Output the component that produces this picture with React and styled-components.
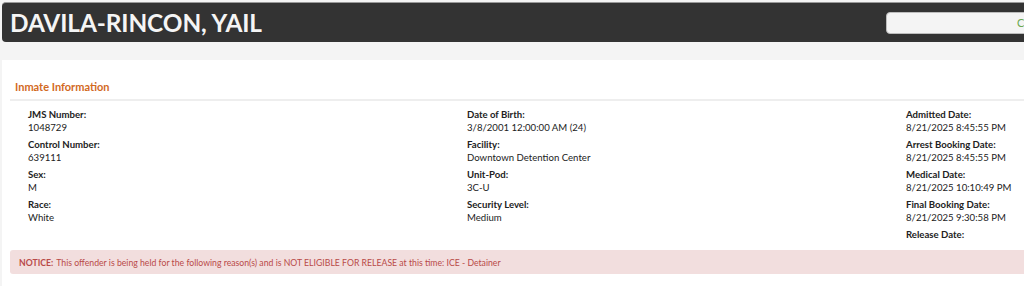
import styled, { createGlobalStyle } from "styled-components";

const GlobalStyle = createGlobalStyle`
  html, body {
    margin: 0;
    padding: 0;
    background: #f4f4f4;
    overflow: hidden;
    font-family: Lato, "Open Sans", sans-serif;
  }
`;

const Page = styled.div`
  width: 1080px;
  padding: 2px 0 0 2px;
`;

const Header = styled.header`
  display: flex;
  align-items: center;
  justify-content: space-between;
  height: 40px;
  background: #333333;
  border-top: 1px solid #9a9a9a;
  box-sizing: border-box;
  border-radius: 4px 0 0 4px;
  padding: 0 0 0 8px;
  margin-bottom: 18px;

  h1 {
    margin: 0;
    color: #f5f5f5;
    font-size: 24.4px;
    font-weight: 700;
    letter-spacing: -0.1px;
  }
`;

const Search = styled.div`
  width: 194px;
  height: 22px;
  margin-right: 2px;
  background: #f4f4f4;
  border-radius: 4px;
  border: 1px solid #bdbdbd;
  box-sizing: border-box;
  display: flex;
  align-items: center;
  padding-left: 130px;
  color: #6aa84f;
  font-size: 11px;
`;

const Panel = styled.section`
  background: #ffffff;
  padding: 20px 0 12px 8px;
`;

const PanelTitle = styled.h2`
  margin: 0 0 0 5px;
  color: #d2691e;
  font-size: 11px;
  font-weight: 700;
  padding-bottom: 6px;
`;

const Divider = styled.div`
  height: 2px;
  background: #eeeeee;
  margin-bottom: 7px;
`;

const Grid = styled.div`
  display: grid;
  grid-template-columns: 439px 439px 1fr;
  padding-left: 18px;
`;

const Column = styled.div`
  display: flex;
  flex-direction: column;
`;

const Field = styled.div`
  display: flex;
  flex-direction: column;
  margin-bottom: 4px;
  font-size: 9.6px;
  line-height: 13px;
  color: #222;
`;

const Label = styled.span`
  font-weight: 700;
`;

const Notice = styled.div`
  margin: 5px 0 0 0;
  background: #f2dede;
  color: #b94a48;
  border-radius: 3px 0 0 3px;
  height: 24px;
  display: flex;
  align-items: center;
  padding-left: 9px;
  font-size: 8.7px;

  strong {
    font-weight: 700;
    margin-right: 3px;
  }
`;

const columns = [
  [
    ["JMS Number:", "1048729"],
    ["Control Number:", "639111"],
    ["Sex:", "M"],
    ["Race:", "White"],
  ],
  [
    ["Date of Birth:", "3/8/2001 12:00:00 AM (24)"],
    ["Facility:", "Downtown Detention Center"],
    ["Unit-Pod:", "3C-U"],
    ["Security Level:", "Medium"],
  ],
  [
    ["Admitted Date:", "8/21/2025 8:45:55 PM"],
    ["Arrest Booking Date:", "8/21/2025 8:45:55 PM"],
    ["Medical Date:", "8/21/2025 10:10:49 PM"],
    ["Final Booking Date:", "8/21/2025 9:30:58 PM"],
    ["Release Date:", ""],
  ],
];

export default function App() {
  return (
    <Page>
      <GlobalStyle />
      <Header>
        <h1>DAVILA-RINCON, YAIL</h1>
        <Search>Clear</Search>
      </Header>
      <Panel>
        <PanelTitle>Inmate Information</PanelTitle>
        <Divider />
        <Grid>
          {columns.map((col, i) => (
            <Column key={i}>
              {col.map(([label, value]) => (
                <Field key={label}>
                  <Label>{label}</Label>
                  {value && <span>{value}</span>}
                </Field>
              ))}
            </Column>
          ))}
        </Grid>
        <Notice>
          <strong>NOTICE:</strong> This offender is being held for the following
          reason(s) and is NOT ELIGIBLE FOR RELEASE at this time: ICE - Detainer
        </Notice>
      </Panel>
    </Page>
  );
}
